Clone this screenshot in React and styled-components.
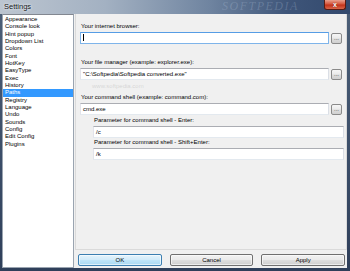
import React from 'react'
import styled, { createGlobalStyle } from 'styled-components'

const GlobalStyle = createGlobalStyle`
    body {
        margin: 0;
        font-family: "Liberation Sans", Arial, sans-serif;
    }
`

const Window = styled.div`
    width: 350px;
    height: 271px;
    display: flex;
    flex-direction: column;
    background: linear-gradient(180deg, #4d6078 0%, #3b4d68 60%, #2f3f5a 100%);
    box-sizing: border-box;
    overflow: hidden;
`

const TitleBar = styled.div`
    position: relative;
    height: 14px;
    flex-shrink: 0;
    display: flex;
    align-items: center;
    padding-left: 4px;
    overflow: hidden;
    background: linear-gradient(90deg, #bcc5d0 0%, #a3b1c2 30%, #6f84a0 60%, #3e5579 82%, #33496d 100%);
`

const Title = styled.span`
    font-size: 7.5px;
    color: #151515;
    text-shadow: 0 0 3px #e8eef5, 0 0 2px #e8eef5;
    margin-top: -2px;
`

const Watermark = styled.span`
    position: absolute;
    left: 222px;
    top: 0;
    font-family: "Liberation Serif", serif;
    font-size: 12px;
    line-height: 13px;
    font-style: italic;
    letter-spacing: 1.5px;
    color: rgba(200, 215, 235, 0.22);
    pointer-events: none;
`

const CloseButton = styled.div`
    position: absolute;
    right: 4px;
    top: 0;
    width: 22px;
    height: 10px;
    border: 1px solid #5a1b12;
    border-top: none;
    border-radius: 0 0 3px 3px;
    box-sizing: border-box;
    background: linear-gradient(180deg, #e9a08e 0%, #d5563d 45%, #c2321a 55%, #d9664a 100%);
    color: #fff;
    font-size: 7px;
    font-weight: bold;
    display: flex;
    align-items: center;
    justify-content: center;
    text-shadow: 0 0 1px #6b1a0d;
`

const Body = styled.div`
    flex: 1;
    display: flex;
    padding: 0 3px 3px 2px;
    min-height: 0;
`

const ListBox = styled.div`
    width: 72px;
    background: #fff;
    border: 1px solid #9aa4b0;
    border-top-color: #828790;
    box-sizing: border-box;
    padding-top: 1px;
    display: flex;
    flex-direction: column;
`

const ListItem = styled.div`
    font-size: 6px;
    line-height: 7.33px;
    height: 7.33px;
    padding-left: 2px;
    color: ${p => (p.$active ? '#fff' : '#000')};
    background: ${p => (p.$active ? '#3399ff' : 'transparent')};
    white-space: nowrap;
`

const Panel = styled.div`
    flex: 1;
    display: flex;
    flex-direction: column;
    background: #f0f0f0;
`

const Content = styled.div`
    position: relative;
    flex: 1;
    margin-left: 1px;
    border: 1px solid #dadada;
    border-top: none;
    padding: 9px 2px 0 4px;
    display: flex;
    flex-direction: column;
`

const SiteMark = styled.span`
    position: absolute;
    left: 16px;
    top: 69px;
    font-size: 6px;
    color: rgba(160, 160, 160, 0.35);
`

const Field = styled.div`
    display: flex;
    flex-direction: column;
    gap: 2px;
    margin-top: ${p => p.$top || 0}px;
    padding-left: ${p => (p.$indent ? 13 : 0)}px;
`

const Label = styled.label`
    font-size: 6px;
    line-height: 7px;
    color: #000;
    padding-left: 1px;
    white-space: nowrap;
`

const Row = styled.div`
    display: flex;
    align-items: center;
    gap: 2px;
`

const TextBox = styled.div`
    flex: 1;
    height: 12px;
    box-sizing: border-box;
    background: #fff;
    border: 1px solid;
    border-color: ${p => (p.$focused ? '#569de5 #7eb4ea #7eb4ea #7eb4ea' : '#abadb3 #dbdfe6 #e3e9ef #e2e3ea')};
    font-size: 6px;
    line-height: 10px;
    padding-left: 2px;
    color: #000;
    white-space: nowrap;
    overflow: hidden;
`

const Caret = styled.span`
    display: inline-block;
    width: 1px;
    height: 7px;
    background: #000;
    vertical-align: middle;
    margin-top: -1px;
`

const BrowseButton = styled.div`
    width: 11px;
    height: 11px;
    box-sizing: border-box;
    border: 1px solid #8a8a8a;
    border-radius: 2px;
    background: linear-gradient(180deg, #f6f6f6 0%, #ebebeb 45%, #dcdcdc 55%, #d0d0d0 100%);
    font-size: 6px;
    line-height: 8px;
    text-align: center;
    color: #333;
    margin-right: 2px;
`

const ButtonRow = styled.div`
    height: 18px;
    flex-shrink: 0;
    display: flex;
    gap: 8px;
    padding: 4px 2px 1px 4px;
    box-sizing: border-box;
`

const Button = styled.div`
    flex: 1;
    height: 12px;
    box-sizing: border-box;
    border: 1px solid ${p => (p.$default ? '#3c7fb1' : '#707070')};
    border-radius: 2px;
    background: ${p =>
        p.$default
            ? 'linear-gradient(180deg, #e5f4fc 0%, #d3ecfa 45%, #bde3f7 55%, #a9d8f2 100%)'
            : 'linear-gradient(180deg, #f2f2f2 0%, #ebebeb 45%, #dddddd 55%, #cfcfcf 100%)'};
    box-shadow: inset 0 0 0 1px rgba(255, 255, 255, 0.6);
    font-size: 6px;
    line-height: 10px;
    text-align: center;
    color: #000;
`

const items = [
    'Appearance',
    'Console look',
    'Hint popup',
    'Dropdown List',
    'Colors',
    'Font',
    'HotKey',
    'EasyType',
    'Exec',
    'History',
    'Paths',
    'Registry',
    'Language',
    'Undo',
    'Sounds',
    'Config',
    'Edit Config',
    'Plugins',
]

const App = () => {
    return (
        <>
            <GlobalStyle />
            <Window>
                <TitleBar>
                    <Title>Settings</Title>
                    <Watermark>SOFTPEDIA</Watermark>
                    <CloseButton>x</CloseButton>
                </TitleBar>
                <Body>
                    <ListBox>
                        {items.map(item => (
                            <ListItem key={item} $active={item === 'Paths'}>
                                {item}
                            </ListItem>
                        ))}
                    </ListBox>
                    <Panel>
                        <Content>
                            <SiteMark>www.softpedia.com</SiteMark>
                            <Field>
                                <Label>Your internet browser:</Label>
                                <Row>
                                    <TextBox $focused>
                                        <Caret />
                                    </TextBox>
                                    <BrowseButton>...</BrowseButton>
                                </Row>
                            </Field>
                            <Field $top={15}>
                                <Label>Your file manager (example: explorer.exe):</Label>
                                <Row>
                                    <TextBox>"C:\Softpedia\Softpedia converted.exe"</TextBox>
                                    <BrowseButton>...</BrowseButton>
                                </Row>
                            </Field>
                            <Field $top={14}>
                                <Label>Your command shell (example: command.com):</Label>
                                <Row>
                                    <TextBox>cmd.exe</TextBox>
                                    <BrowseButton>...</BrowseButton>
                                </Row>
                            </Field>
                            <Field $top={2} $indent>
                                <Label>Parameter for command shell - Enter:</Label>
                                <Row>
                                    <TextBox>/c</TextBox>
                                </Row>
                            </Field>
                            <Field $top={1} $indent>
                                <Label>Parameter for command shell - Shift+Enter:</Label>
                                <Row>
                                    <TextBox>/k</TextBox>
                                </Row>
                            </Field>
                        </Content>
                        <ButtonRow>
                            <Button $default>OK</Button>
                            <Button>Cancel</Button>
                            <Button>Apply</Button>
                        </ButtonRow>
                    </Panel>
                </Body>
            </Window>
        </>
    )
}

export default App
